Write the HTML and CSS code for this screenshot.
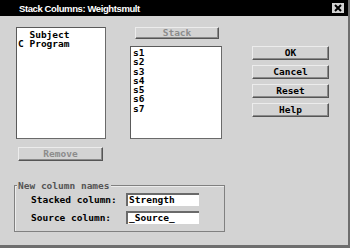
FILE: index.html
```html
<!DOCTYPE html>
<html>
<head>
<meta charset="utf-8">
<link rel="stylesheet" href="styles.css">
</head>
<body>
<div class="window">
  <div class="titlebar">
    <span class="title">Stack Columns: Weightsmult</span>
    <span class="close">
      <svg width="8" height="8" viewBox="0 0 8 8"><path d="M1 1 L7 7 M7 1 L1 7" stroke="#000" stroke-width="2"/></svg>
    </span>
  </div>
  <div class="main">
    <div class="col-left">
      <div class="listbox list-left"><div class="item">  Subject</div><div class="item">C Program</div></div>
      <div class="btn disabled btn-remove">Remove</div>
    </div>
    <div class="col-mid">
      <div class="btn disabled btn-stack">Stack</div>
      <div class="listbox list-mid">
        <div class="item">s1</div>
        <div class="item">s2</div>
        <div class="item">s3</div>
        <div class="item">s4</div>
        <div class="item">s5</div>
        <div class="item">s6</div>
        <div class="item">s7</div>
      </div>
    </div>
    <div class="col-right">
      <div class="btn">OK</div>
      <div class="btn">Cancel</div>
      <div class="btn">Reset</div>
      <div class="btn">Help</div>
    </div>
  </div>
  <div class="group">
    <span class="legend">New column names</span>
    <div class="row"><span class="label">Stacked column:</span><span class="field">Strength</span></div>
    <div class="row"><span class="label">Source column:</span><span class="field">_Source_</span></div>
  </div>
</div>
</body>
</html>
```
FILE: styles.css
```css
* { box-sizing: border-box; }
html, body { margin: 0; padding: 0; }
body {
  width: 350px;
  height: 248px;
  background: #d3d3d3;
  font-family: "DejaVu Sans Mono", "Liberation Mono", monospace;
  font-weight: bold;
  font-size: 9.5px;
  color: #000;
  overflow: hidden;
}
.window {
  width: 350px;
  height: 248px;
  background: #d3d3d3;
  border-right: 2px solid #6e6e6e;
  border-bottom: 3px solid #6e6e6e;
}
.titlebar {
  height: 16px;
  background: #000;
  display: flex;
  align-items: center;
  justify-content: space-between;
  padding-left: 19px;
  padding-right: 4px;
}
.title {
  color: #fff;
  font-family: "Liberation Sans", Arial, sans-serif;
  font-weight: bold;
  font-size: 9.5px;
  letter-spacing: -0.4px;
}
.close {
  width: 12px;
  height: 10px;
  background: #d3d3d3;
  display: flex;
  align-items: center;
  justify-content: center;
}
.close svg { display: block; }
.main {
  display: flex;
  padding: 11px 0 0 16px;
}
.col-left { width: 90px; }
.col-mid { width: 92px; margin-left: 24px; }
.col-right { width: 77px; margin-left: 30px; padding-top: 19px; display: flex; flex-direction: column; gap: 5px; }
.listbox {
  background: #fff;
  border: 1px solid #6a6a6a;
  border-top-color: #5a5a5a;
  border-left-color: #5a5a5a;
  line-height: 9.3px;
}
.list-left { height: 112px; padding: 2px 0 0 1px; }
.list-mid { height: 93px; margin-top: 7px; padding: 1px 0 0 2px; }
.item { height: 9.3px; white-space: pre; }
.btn {
  height: 14px;
  background: #d3d3d3;
  border: 1px solid #d3d3d3;
  border-top-color: #ececec;
  border-left-color: #ececec;
  border-right-color: #555;
  border-bottom-color: #555;
  box-shadow: inset -1px -1px 0 #8a8a8a;
  display: flex;
  align-items: center;
  justify-content: center;
  line-height: 1;
}
.btn.disabled { color: #8c8c8c; }
.btn-remove { width: 85px; margin: 8px 0 0 2px; }
.btn-stack { width: 84px; height: 12px; margin-left: 5px; }
.group {
  position: relative;
  margin: 24px 0 0 14px;
  width: 211px;
  border: 1px solid #808080;
  box-shadow: inset 1px 1px 0 #ececec;
  padding: 7px 0 7px 16px;
  display: flex;
  flex-direction: column;
  gap: 5px;
}
.legend {
  position: absolute;
  top: -6px;
  left: 2px;
  padding: 0 1px;
  background: #d3d3d3;
  color: #555;
  line-height: 11px;
}
.row { display: flex; align-items: center; height: 13px; }
.label { width: 95px; }
.field {
  width: 73px;
  height: 13px;
  background: #fff;
  border-top: 2px solid #6a6a6a;
  border-left: 2px solid #6a6a6a;
  padding-left: 1px;
  line-height: 10px;
  white-space: pre;
}
```
